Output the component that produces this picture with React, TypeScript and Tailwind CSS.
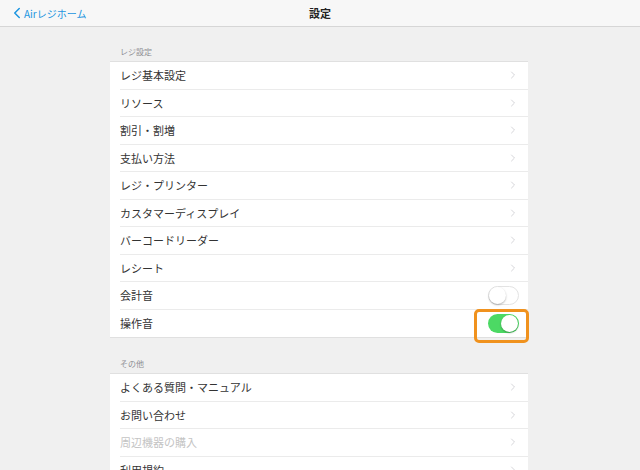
import { ChevronLeft, ChevronRight } from 'lucide-react';

type Row = { label: string; kind?: 'link' | 'off' | 'on'; disabled?: boolean };

const registerRows: Row[] = [
  { label: 'レジ基本設定' },
  { label: 'リソース' },
  { label: '割引・割増' },
  { label: '支払い方法' },
  { label: 'レジ・プリンター' },
  { label: 'カスタマーディスプレイ' },
  { label: 'バーコードリーダー' },
  { label: 'レシート' },
  { label: '会計音', kind: 'off' },
  { label: '操作音', kind: 'on' },
];

const otherRows: Row[] = [
  { label: 'よくある質問・マニュアル' },
  { label: 'お問い合わせ' },
  { label: '周辺機器の購入', disabled: true },
  { label: '利用規約' },
];

function Toggle({ on }: { on: boolean }) {
  return (
    <div
      className={
        on
          ? 'relative h-[19px] w-[31px] rounded-full bg-[#4cd964]'
          : 'relative h-[19px] w-[31px] rounded-full border border-[#e3e3e3] bg-white'
      }
    >
      <div
        className={
          on
            ? 'absolute right-[1px] top-[1px] h-[17px] w-[17px] rounded-full bg-white shadow-[0_1px_2px_rgba(0,0,0,0.3)]'
            : 'absolute left-0 top-0 h-[17px] w-[17px] rounded-full bg-white shadow-[0_1px_2px_rgba(0,0,0,0.3)]'
        }
      />
    </div>
  );
}

function Group({ title, rows }: { title: string; rows: Row[] }) {
  return (
    <div className="flex flex-col">
      <div className="px-[10px] pb-[3px] text-[8px] text-[#8e8e93]">{title}</div>
      <div className="border-y border-[#e0e0e0] bg-white">
        {rows.map((row, i) => (
          <div key={row.label} className="relative flex h-[27.5px] items-center pl-[10px]">
            <div
              className={
                i < rows.length - 1
                  ? 'flex h-full flex-1 items-center border-b border-[#ebebeb] pr-[9px]'
                  : 'flex h-full flex-1 items-center pr-[9px]'
              }
            >
              <span className={row.disabled ? 'flex-1 text-[11px] text-[#c4c4c4]' : 'flex-1 text-[11px] text-[#333]'}>
                {row.label}
              </span>
              {row.kind === 'off' && <Toggle on={false} />}
              {row.kind === 'on' && <Toggle on />}
              {!row.kind && <ChevronRight size={12} strokeWidth={1.5} className="text-[#c7c7cc]" />}
            </div>
            {row.kind === 'on' && (
              <div className="absolute right-[-1px] top-[-1px] h-[34px] w-[55px] rounded-[5px] border-[3px] border-[#f0921e]" />
            )}
          </div>
        ))}
      </div>
    </div>
  );
}

export default function App() {
  return (
    <div
      className="flex h-[470px] w-[640px] flex-col overflow-hidden bg-[#f0f0f0]"
      style={{ fontFamily: '"Noto Sans CJK JP", "Noto Sans", sans-serif' }}
    >
      <header className="relative flex h-[27px] shrink-0 items-center justify-center border-b border-[#d6d6d6] bg-[#f7f7f7]">
        <div className="absolute left-[8px] top-0 flex h-full items-center text-[#1b95e0]">
          <ChevronLeft size={18} strokeWidth={2} className="-mr-[2px]" />
          <span className="text-[10px]">Airレジホーム</span>
        </div>
        <span className="text-[11px] font-bold text-[#222]">設定</span>
      </header>
      <main className="ml-[110px] mr-[112px] mt-[19px] flex flex-col gap-[20px]">
        <Group title="レジ設定" rows={registerRows} />
        <Group title="その他" rows={otherRows} />
      </main>
    </div>
  );
}
